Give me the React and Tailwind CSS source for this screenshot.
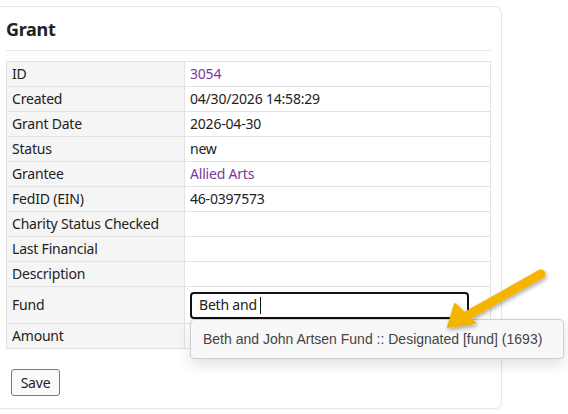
import React from "react";

const rows = [
  ["ID", "3054", "link"],
  ["Created", "04/30/2026 14:58:29"],
  ["Grant Date", "2026-04-30"],
  ["Status", "new"],
  ["Grantee", "Allied Arts", "link"],
  ["FedID (EIN)", "46-0397573"],
  ["Charity Status Checked", ""],
  ["Last Financial", ""],
  ["Description", ""],
];

export default function App() {
  return (
    <div className="relative w-[568px] h-[414px] bg-white overflow-hidden text-[14px] text-[#222] tracking-[-0.2px]" style={{ fontFamily: '"Noto Sans", sans-serif' }}>
      <div className="ml-[-1px] mt-[6px] w-[503px] h-[403px] border border-[#e3e7ee] rounded-r-[7px] bg-white shadow-[0_1px_2px_rgba(0,0,0,0.04)]">
        <div className="pl-[6px] pr-[10px]">
          <h2 className="pt-[11px] pb-[10px] text-[18px] font-bold leading-[22px] text-[#222] border-b border-[#e3e7ee] tracking-[-0.3px]">Grant</h2>
          <table className="mt-[10px] w-[485px] border-collapse border border-[#e2e2e2] text-[14px] leading-[18px]">
            <tbody>
              {rows.map(([k, v, t]) => (
                <tr key={k} className="h-[25px]">
                  <td className="w-[178px] bg-[#f5f5f5] border border-[#e2e2e2] px-[5px] py-0">{k}</td>
                  <td className={"border border-[#e2e2e2] px-[5px] py-0 " + (t ? "text-[#7a3a9a]" : "text-[#222]")}>{v}</td>
                </tr>
              ))}
              <tr className="h-[37px]">
                <td className="bg-[#f5f5f5] border border-[#e2e2e2] px-[5px] py-0">Fund</td>
                <td className="border border-[#e2e2e2] px-[5px] py-0">
                  <div className="w-[279px] h-[27px] border-2 border-[#111] rounded-[4px] flex items-center pl-[7px]">
                    <span>Beth and</span>
                    <span className="ml-[3px] w-px h-[17px] bg-[#111]" />
                  </div>
                </td>
              </tr>
              <tr className="h-[25px]">
                <td className="bg-[#f5f5f5] border border-[#e2e2e2] px-[5px] py-0">Amount</td>
                <td className="border border-[#e2e2e2] px-[5px] py-0"></td>
              </tr>
            </tbody>
          </table>
          <button className="mt-[20px] ml-[5px] w-[49px] h-[27px] border border-[#777] rounded-[3px] bg-[#fafafa] text-[14px] text-[#222] leading-none">Save</button>
        </div>
      </div>
      <div className="absolute left-[190px] top-[319px] w-[374px] h-[40px] bg-[#f8f8f8] border border-[#cfcfcf] rounded-[4px] shadow-[0_6px_14px_rgba(0,0,0,0.12)] flex items-center pl-[12px] text-[14px] text-[#444] tracking-normal" style={{ fontFamily: '"Liberation Sans", Arial, sans-serif' }}>
        Beth and John Artsen Fund :: Designated [fund] (1693)
      </div>
      <svg className="absolute left-0 top-0" width="568" height="414" viewBox="0 0 568 414">
        <defs>
          <filter id="sh" x="-20%" y="-20%" width="140%" height="140%">
            <feDropShadow dx="1" dy="2" stdDeviation="2" floodColor="#000" floodOpacity="0.35" />
          </filter>
        </defs>
        <g filter="url(#sh)">
          <line x1="541" y1="274" x2="468" y2="315" stroke="#f4b400" strokeWidth="9" strokeLinecap="round" />
          <polygon points="448,327 455,304 475,323" fill="#f4b400" stroke="#f4b400" strokeWidth="2" strokeLinejoin="round" />
        </g>
      </svg>
    </div>
  );
}
